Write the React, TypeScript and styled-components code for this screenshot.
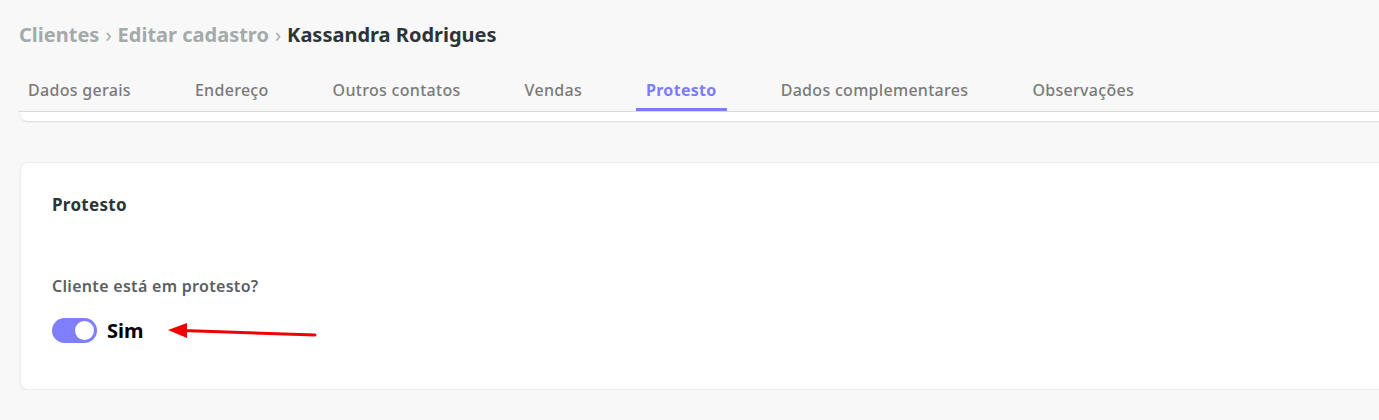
import styled, { createGlobalStyle } from "styled-components";

const GlobalStyle = createGlobalStyle`
    * {
        box-sizing: border-box;
    }
    html, body {
        margin: 0;
        padding: 0;
        background: #f8f8f9;
        font-family: "Noto Sans", Lato, sans-serif;
        overflow: hidden;
    }
`;

const tabs = [
    "Dados gerais",
    "Endereço",
    "Outros contatos",
    "Vendas",
    "Protesto",
    "Dados complementares",
    "Observações",
];

export default function App(): JSX.Element {
    return (
        <>
            <GlobalStyle />
            <Page>
                <Breadcrumb>
                    <Crumb>Clientes</Crumb>
                    <Separator>›</Separator>
                    <Crumb>Editar cadastro</Crumb>
                    <Separator>›</Separator>
                    <Current>Kassandra Rodrigues</Current>
                </Breadcrumb>

                <TabBar>
                    {tabs.map((tab) => (
                        <Tab key={tab} $active={tab === "Protesto"}>
                            {tab}
                        </Tab>
                    ))}
                </TabBar>

                <HiddenCardEdge />

                <Card>
                    <CardTitle>Protesto</CardTitle>
                    <FieldLabel>Cliente está em protesto?</FieldLabel>
                    <ToggleRow>
                        <Switch $on>
                            <Knob />
                        </Switch>
                        <SwitchText>Sim</SwitchText>
                        <Arrow width="152" height="20" viewBox="0 0 152 20">
                            <line x1="16" y1="7.5" x2="148" y2="12" stroke="#f00000" strokeWidth="3" strokeLinecap="round" />
                            <polygon points="1,7 20,0 20,15" fill="#f00000" />
                        </Arrow>
                    </ToggleRow>
                </Card>
            </Page>
        </>
    );
}

const Page = styled.div`
    padding: 22px 0 0 18px;
    width: 1400px;
`;

const Breadcrumb = styled.div`
    display: flex;
    align-items: center;
    gap: 6px;
    padding-left: 1px;
    height: 26px;
    font-size: 20px;
    font-weight: 700;
    line-height: 26px;
`;

const Crumb = styled.span`
    color: #a3abaa;
`;

const Separator = styled.span`
    color: #a3abaa;
    font-weight: 400;
    font-size: 20px;
`;

const Current = styled.span`
    color: #2d3436;
`;

const TabBar = styled.div`
    display: flex;
    gap: 44px;
    margin-top: 21px;
    border-bottom: 1px solid #dcdcdc;
`;

const Tab = styled.div<{ $active?: boolean }>`
    position: relative;
    height: 42px;
    padding: 3px 10px 0;
    display: flex;
    align-items: center;
    font-size: 16px;
    line-height: 20px;
    letter-spacing: 0.3px;
    font-weight: ${({ $active }) => ($active ? 700 : 500)};
    color: ${({ $active }) => ($active ? "#7d7cf9" : "#7a7a7a")};
    border-bottom: 3px solid ${({ $active }) => ($active ? "#7d7cf9" : "transparent")};
`;

const HiddenCardEdge = styled.div`
    height: 9px;
    margin-left: 2px;
    background: #ffffff;
    border-radius: 0 0 8px 8px;
    box-shadow: 0 1px 2px rgba(0, 0, 0, 0.12);
`;

const Card = styled.div`
    margin: 41px 0 0 2px;
    height: 228px;
    padding: 32px 31px 0 31px;
    background: #ffffff;
    border: 1px solid #ececec;
    border-radius: 8px;
    box-shadow: 0 1px 2px rgba(0, 0, 0, 0.08);
`;

const CardTitle = styled.div`
    font-size: 17px;
    font-weight: 700;
    line-height: 20px;
    letter-spacing: 0.3px;
    color: #2d3436;
`;

const FieldLabel = styled.div`
    margin-top: 61px;
    font-size: 16px;
    font-weight: 600;
    line-height: 20px;
    letter-spacing: 0.3px;
    color: #5a6062;
`;

const ToggleRow = styled.div`
    display: flex;
    align-items: center;
    margin-top: 22px;
`;

const Switch = styled.div<{ $on?: boolean }>`
    width: 45px;
    height: 25px;
    border-radius: 13px;
    padding: 3px;
    display: flex;
    justify-content: ${({ $on }) => ($on ? "flex-end" : "flex-start")};
    background: ${({ $on }) => ($on ? "#7f7ffb" : "#cfcfcf")};
`;

const Knob = styled.div`
    width: 19px;
    height: 19px;
    border-radius: 50%;
    background: #ffffff;
`;

const SwitchText = styled.span`
    margin-left: 10px;
    font-size: 20px;
    line-height: 24px;
    font-weight: 700;
    color: #000000;
`;

const Arrow = styled.svg`
    margin-left: 23px;
    margin-top: 4px;
`;
